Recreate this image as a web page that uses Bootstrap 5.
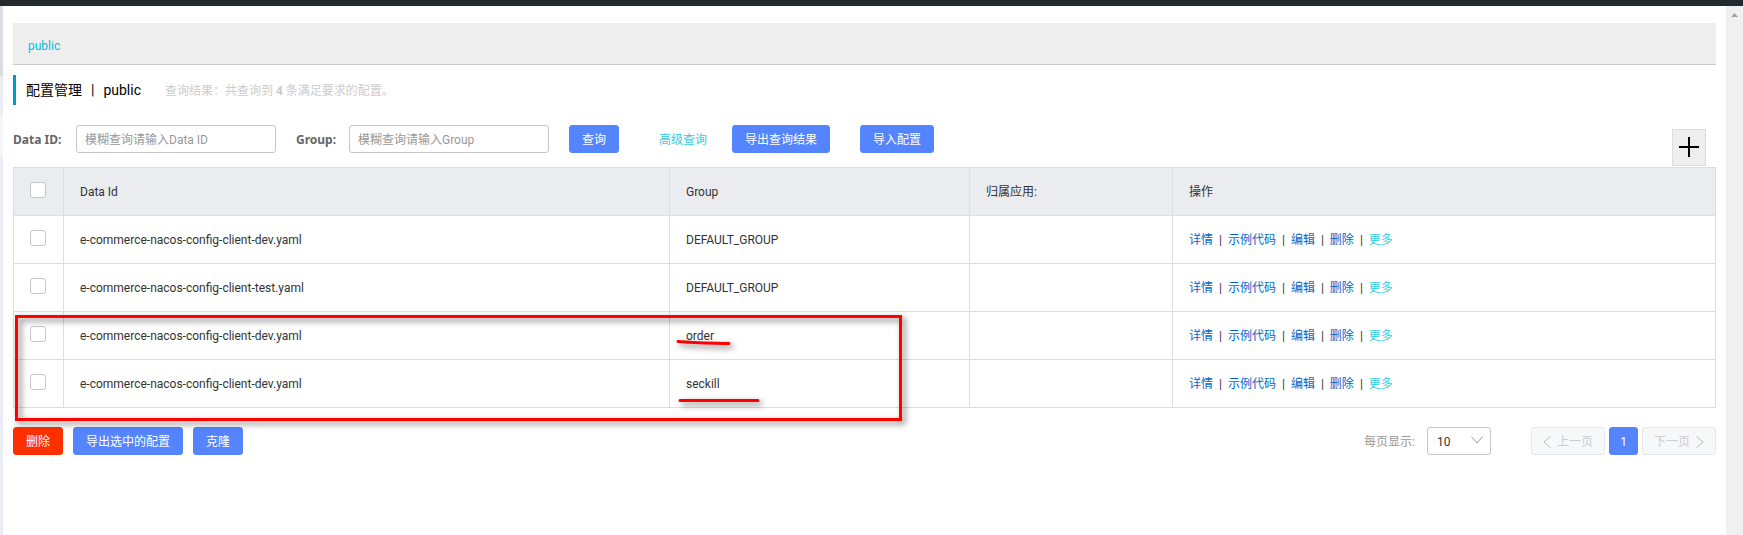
<!DOCTYPE html>
<html lang="zh-CN">
<head>
<meta charset="utf-8">
<meta name="viewport" content="width=device-width, initial-scale=1">
<title>配置管理</title>
<link rel="stylesheet" href="https://cdn.jsdelivr.net/npm/bootstrap@5.3.0/dist/css/bootstrap.min.css">
<style>
  body { font-family: Roboto, "Noto Sans CJK SC", sans-serif; font-size: 12px; line-height: 18px; color: #333; }
  a { color: #06c; text-decoration: none; }
  a.cyan { color: #33cde5; }
  .topbar { height: 6px; background: #24292e; }
  .side-edge { width: 3px; background: #eaedf4; }
  .side-edge .active-part { height: 70px; background: #d9dee4; }
  .side-edge .light-part { height: 40px; margin-top: 40px; background: #f4f6fa; }
  .scroll-track { width: 17px; padding-top: 7px; background: #f0f0f0; text-align: center; line-height: 0; }
  .page-main { padding: 17px 10px 0; min-width: 0; }
  .ns-bar { height: 42px; padding: 4px 15px 0; background: #eee; border-bottom: 1px solid #ccc; }
  .ns-bar a { color: #00c1de; }
  .page-title { height: 30px; margin: 10px 0 20px; padding-left: 10px; border-left: 3px solid #09c; }
  .page-title h1 { font-size: 14px; font-weight: 400; line-height: 20px; color: #000; margin: 0; }
  .page-title .bar { margin: 0 9px; }
  .page-title .result { color: #ccc; margin-left: 24px; padding-top: 2px; }
  .search-label { font-family: "Noto Sans", sans-serif; font-weight: 700; color: #666; padding-top: 1px; }
  .label-id { width: 63px; }
  .label-group { width: 53px; margin-left: 20px; }
  .field { width: 200px; height: 28px; padding: 1px 8px 0; font-size: 12px; border: 1px solid #c4c6cf; border-radius: 3px; }
  .field::placeholder { color: #999; }
  .act { height: 28px; padding: 2px 12px 0; font-size: 12px; line-height: 18px; border: 1px solid #5584ff; border-radius: 3px; background: #5584ff; color: #fff; }
  .act.danger { background: #ff3000; border-color: #ff3000; }
  .find { margin-left: 20px; }
  .advanced { margin: 0 25px 0 40px; padding-top: 2px; }
  .import { margin-left: 30px; }
  .table-area { margin-top: 14px; }
  .add-btn { right: 10px; bottom: 1px; width: 34px; height: 37px; padding: 0 0 2px; border: 1px solid #ddd; background: #eee; }
  .grid { table-layout: fixed; border-collapse: collapse; width: 100%; margin: 0; border: 1px solid #dcdee3; }
  .grid th, .grid td { height: 48px; padding: 0 16px; border: 1px solid #dcdee3; font-weight: 400; text-align: left; vertical-align: middle; }
  .grid th { background: #ebecf0; }
  .grid .pick { width: 50px; padding: 0 1px 0 0; text-align: center; line-height: 0; }
  .grid .group-col { width: 300px; }
  .grid .app-col { width: 203px; }
  .grid .ops-col { width: 543px; }
  .grid input { margin: 0 0 4px; width: 16px; height: 16px; border: 1px solid #c4c6cf; border-radius: 3px; float: none; }
  .grid .sep { margin: 0 6px; }
  .marks { left: 2px; top: 148px; width: 888px; height: 106px; pointer-events: none; overflow: visible; filter: drop-shadow(3px 3px 3px rgba(0,0,0,.55)); }
  .table-foot { margin-top: 19px; }
  .foot-actions { gap: 10px; }
  .per-page { color: #999; margin-right: 12px; padding-top: 2px; }
  .size-select { width: 64px; height: 28px; padding: 2px 9px 0; font-size: 12px; line-height: 18px; color: #333; border: 1px solid #c4c6cf; border-radius: 3px; background: #fff; appearance: none; }
  .size-arrow { right: 8px; top: 9px; pointer-events: none; }
  .pager { gap: 4px; margin-left: 40px; }
  .pager button { display: flex; align-items: center; justify-content: center; gap: 6px; width: 74px; height: 28px; padding: 1px 0 0; border: 1px solid #e6e7eb; border-radius: 3px; background: #f7f8fa; color: #ccc; }
  .pager button.current { width: 29px; background: #5584ff; border-color: #5584ff; color: #fff; }
</style>
</head>
<body>
<div class="d-flex flex-column vh-100 overflow-hidden">
  <header class="topbar flex-shrink-0"></header>
  <div class="d-flex flex-grow-1">
    <div class="side-edge flex-shrink-0"><div class="active-part"></div><div class="light-part"></div></div>
    <main class="page-main flex-grow-1">
      <nav class="ns-bar d-flex align-items-center"><a href="#">public</a></nav>
      <div class="page-title d-flex align-items-center">
        <h1>配置管理<span class="bar">|</span>public</h1>
        <span class="result">查询结果：共查询到 <b>4</b> 条满足要求的配置。</span>
      </div>
      <form class="d-flex align-items-center">
        <label class="search-label label-id" for="dataId">Data ID:</label>
        <input class="field" id="dataId" type="text" placeholder="模糊查询请输入Data ID">
        <label class="search-label label-group" for="group">Group:</label>
        <input class="field" id="group" type="text" placeholder="模糊查询请输入Group">
        <button class="act find" type="button">查询</button>
        <a class="cyan advanced" href="#">高级查询</a>
        <button class="act" type="button">导出查询结果</button>
        <button class="act import" type="button">导入配置</button>
      </form>
      <section class="position-relative table-area">
        <div class="position-relative">
          <button class="add-btn position-absolute d-flex align-items-center justify-content-center" type="button" aria-label="新建配置">
            <svg width="20" height="20" viewBox="0 0 20 20" stroke="#000" stroke-width="2"><path d="M0 10H20M10 0V20"/></svg>
          </button>
        </div>
        <table class="grid">
          <thead><tr>
            <th class="pick"><input class="form-check-input" type="checkbox" aria-label="全选"></th>
            <th>Data Id</th><th class="group-col">Group</th><th class="app-col">归属应用:</th><th class="ops-col">操作</th>
          </tr></thead>
          <tbody>
            <tr><td class="pick"><input class="form-check-input" type="checkbox" aria-label="选择"></td><td>e-commerce-nacos-config-client-dev.yaml</td><td>DEFAULT_GROUP</td><td></td>
              <td><a href="#">详情</a><span class="sep">|</span><a href="#">示例代码</a><span class="sep">|</span><a href="#">编辑</a><span class="sep">|</span><a href="#">删除</a><span class="sep">|</span><a class="cyan" href="#">更多</a></td></tr>
            <tr><td class="pick"><input class="form-check-input" type="checkbox" aria-label="选择"></td><td>e-commerce-nacos-config-client-test.yaml</td><td>DEFAULT_GROUP</td><td></td>
              <td><a href="#">详情</a><span class="sep">|</span><a href="#">示例代码</a><span class="sep">|</span><a href="#">编辑</a><span class="sep">|</span><a href="#">删除</a><span class="sep">|</span><a class="cyan" href="#">更多</a></td></tr>
            <tr><td class="pick"><input class="form-check-input" type="checkbox" aria-label="选择"></td><td>e-commerce-nacos-config-client-dev.yaml</td><td>order</td><td></td>
              <td><a href="#">详情</a><span class="sep">|</span><a href="#">示例代码</a><span class="sep">|</span><a href="#">编辑</a><span class="sep">|</span><a href="#">删除</a><span class="sep">|</span><a class="cyan" href="#">更多</a></td></tr>
            <tr><td class="pick"><input class="form-check-input" type="checkbox" aria-label="选择"></td><td>e-commerce-nacos-config-client-dev.yaml</td><td>seckill</td><td></td>
              <td><a href="#">详情</a><span class="sep">|</span><a href="#">示例代码</a><span class="sep">|</span><a href="#">编辑</a><span class="sep">|</span><a href="#">删除</a><span class="sep">|</span><a class="cyan" href="#">更多</a></td></tr>
          </tbody>
        </table>
        <svg class="marks position-absolute" viewBox="0 0 888 106" fill="none" stroke="#f00" stroke-width="3" stroke-linecap="round" aria-hidden="true">
          <rect x="1.500" y="1.500" width="884" height="103"/>
          <path d="M663 26.500C680 28 696 28 714 28.500M665 85.500H743"/>
        </svg>
      </section>
      <div class="table-foot d-flex align-items-center">
        <div class="foot-actions d-flex me-auto">
          <button class="act danger" type="button">删除</button>
          <button class="act" type="button">导出选中的配置</button>
          <button class="act" type="button">克隆</button>
        </div>
        <label class="per-page" for="pageSize">每页显示:</label>
        <div class="position-relative">
          <select class="size-select d-block" id="pageSize"><option>10</option><option>20</option><option>50</option></select>
          <svg class="size-arrow position-absolute" width="12" height="8" viewBox="0 0 12 8" fill="none" stroke="#999"><path d="M.5 .5 6 7 11.500 .5"/></svg>
        </div>
        <div class="pager d-flex">
          <button type="button" disabled><svg width="8" height="12" viewBox="0 0 8 12" fill="none" stroke="#bbb"><path d="M7.500 .5 1 6 7.500 11.500"/></svg>上一页</button>
          <button class="current" type="button">1</button>
          <button type="button" disabled>下一页<svg width="8" height="12" viewBox="0 0 8 12" fill="none" stroke="#bbb"><path d="M.5 .5 7 6 .5 11.500"/></svg></button>
        </div>
      </div>
    </main>
    <div class="scroll-track flex-shrink-0"><svg width="7" height="4" viewBox="0 0 7 4" fill="#a3a3a3"><path d="M0 4 3.500 0 7 4Z"/></svg></div>
  </div>
</div>
<script src="https://cdn.jsdelivr.net/npm/bootstrap@5.3.0/dist/js/bootstrap.bundle.min.js"></script>
</body>
</html>
